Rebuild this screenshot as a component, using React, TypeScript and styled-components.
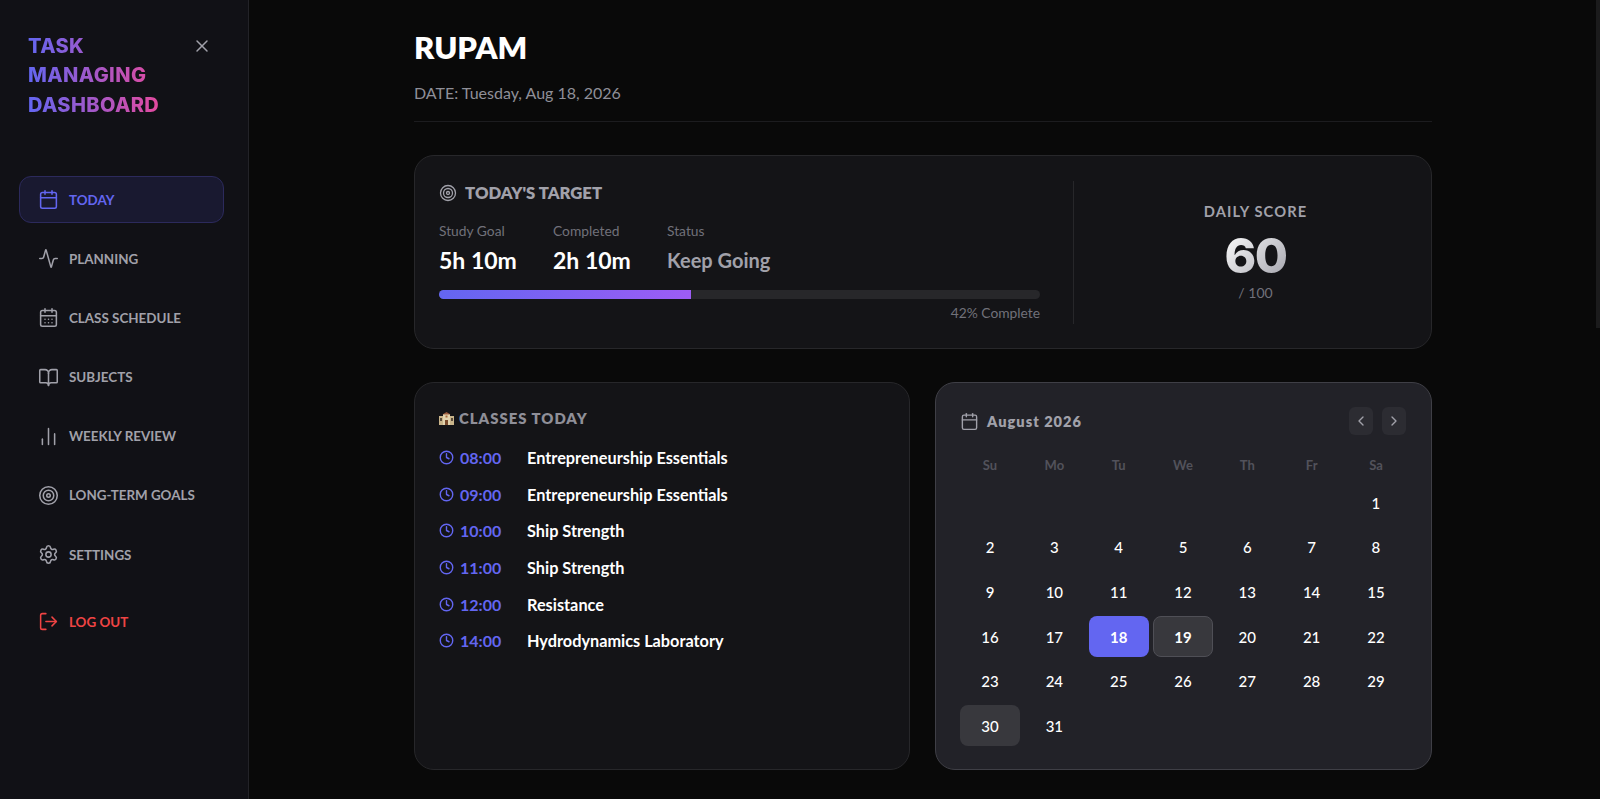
import { Activity, BookOpen, Calendar, CalendarDays, ChartNoAxesColumn, ChevronLeft, ChevronRight, Clock, LogOut, Settings, Target, X } from 'lucide-react';
import styled, { createGlobalStyle } from 'styled-components';

const GlobalStyle = createGlobalStyle`
  * {
    box-sizing: border-box;
  }

  html, body {
    margin: 0;
    height: 100%;
    overflow: hidden;
    background: #090909;
    font-family: 'Lato', 'Noto Sans', sans-serif;
  }
`;

const navItems = [
  { label: 'TODAY', icon: Calendar, active: true },
  { label: 'PLANNING', icon: Activity },
  { label: 'CLASS SCHEDULE', icon: CalendarDays },
  { label: 'SUBJECTS', icon: BookOpen },
  { label: 'WEEKLY REVIEW', icon: ChartNoAxesColumn },
  { label: 'LONG-TERM GOALS', icon: Target },
  { label: 'SETTINGS', icon: Settings },
];

const classes = [
  { time: '08:00', name: 'Entrepreneurship Essentials' },
  { time: '09:00', name: 'Entrepreneurship Essentials' },
  { time: '10:00', name: 'Ship Strength' },
  { time: '11:00', name: 'Ship Strength' },
  { time: '12:00', name: 'Resistance' },
  { time: '14:00', name: 'Hydrodynamics Laboratory' },
];

const stats = [
  { label: 'Study Goal', value: '5h 10m' },
  { label: 'Completed', value: '2h 10m' },
  { label: 'Status', value: 'Keep Going', muted: true },
];

const weekDays = ['Su', 'Mo', 'Tu', 'We', 'Th', 'Fr', 'Sa'];
const blanks = [0, 1, 2, 3, 4, 5];
const days = Array.from({ length: 31 }, (_, i) => i + 1);

function SchoolIcon() {
  return (
    <svg width="15" height="13" viewBox="0 0 15 13">
      <rect x="0" y="4" width="15" height="9" fill="#c9b48a" />
      <rect x="4" y="2" width="7" height="11" fill="#e2d3ae" />
      <path d="M3.5 2.5 7.5 0 11.5 2.5Z" fill="#9a5a3c" />
      <rect x="6" y="8" width="3" height="5" fill="#7a4a2c" />
      <rect x="1" y="6" width="2" height="3" fill="#5a4a3a" />
      <rect x="12" y="6" width="2" height="3" fill="#5a4a3a" />
      <rect x="6.5" y="3.5" width="2" height="2" fill="#a86a3c" />
    </svg>
  );
}

export default function App() {
  return (
    <Layout>
      <GlobalStyle />
      <Sidebar>
        <Brand>
          <BrandTitle>TASK MANAGING DASHBOARD</BrandTitle>
          <CloseButton type="button"><X size={20} strokeWidth={1.75} /></CloseButton>
        </Brand>
        <Nav>
          {navItems.map(({ label, icon: Icon, active }) => (
            <NavItem key={label} $active={active}>
              <Icon size={21} strokeWidth={1.75} />
              {label}
            </NavItem>
          ))}
          <Logout>
            <LogOut size={21} strokeWidth={1.75} />
            LOG OUT
          </Logout>
        </Nav>
      </Sidebar>
      <Main>
        <Content>
          <Header>
            <Name>RUPAM</Name>
            <DateLine>DATE: Tuesday, Aug 18, 2026</DateLine>
          </Header>
          <TargetCard>
            <TargetLeft>
              <TargetTitle><Target size={18} strokeWidth={1.75} />TODAY'S TARGET</TargetTitle>
              <Stats>
                {stats.map((stat) => (
                  <Stat key={stat.label}>
                    <StatLabel>{stat.label}</StatLabel>
                    <StatValue $muted={stat.muted}>{stat.value}</StatValue>
                  </Stat>
                ))}
              </Stats>
              <Track><Fill style={{ width: '42%' }} /></Track>
              <Percent>42% Complete</Percent>
            </TargetLeft>
            <Score>
              <ScoreLabel>DAILY SCORE</ScoreLabel>
              <ScoreValue>60</ScoreValue>
              <ScoreMax>/ 100</ScoreMax>
            </Score>
          </TargetCard>
          <Columns>
            <ClassesCard>
              <ClassesTitle><SchoolIcon />CLASSES TODAY</ClassesTitle>
              <ClassList>
                {classes.map((item, idx) => (
                  <ClassRow key={idx}>
                    <Time><Clock size={15} strokeWidth={2.25} />{item.time}</Time>
                    <ClassName>{item.name}</ClassName>
                  </ClassRow>
                ))}
              </ClassList>
            </ClassesCard>
            <CalendarCard>
              <CalendarHead>
                <Month><Calendar size={19} strokeWidth={1.75} />August 2026</Month>
                <Arrows>
                  <Arrow type="button"><ChevronLeft size={16} strokeWidth={2} /></Arrow>
                  <Arrow type="button"><ChevronRight size={16} strokeWidth={2} /></Arrow>
                </Arrows>
              </CalendarHead>
              <WeekRow>
                {weekDays.map((day) => <WeekDay key={day}>{day}</WeekDay>)}
              </WeekRow>
              <DayGrid>
                {blanks.map((n) => <Day key={n} as="span" />)}
                {days.map((day) => (
                  <Day key={day} $today={day === 18} $marked={day === 19} $soft={day === 30}>{day}</Day>
                ))}
              </DayGrid>
            </CalendarCard>
          </Columns>
        </Content>
        <ScrollThumb />
      </Main>
    </Layout>
  );
}

const Layout = styled.div`
  display: flex;
  height: 100vh;
  background: #090909;
`;

const Sidebar = styled.aside`
  flex-shrink: 0;
  width: 249px;
  height: 100%;
  padding: 32px 24px 0 19px;
  background: #111116;
  border-right: 1px solid #232328;
`;

const Brand = styled.div`
  display: flex;
  justify-content: space-between;
  align-items: flex-start;
  height: 144px;
  padding: 0 12px 0 9px;
`;

const BrandTitle = styled.h1`
  width: 140px;
  margin: 0;
  font-family: 'Inter', sans-serif;
  font-size: 20px;
  font-weight: 800;
  letter-spacing: 0.4px;
  line-height: 29.3px;
  background: linear-gradient(90deg, #6366f1, #ec4899);
  -webkit-background-clip: text;
  background-clip: text;
  color: transparent;
`;

const CloseButton = styled.button`
  display: flex;
  margin: 4px 0 0;
  padding: 0;
  border: none;
  background: none;
  color: #a1a1aa;
`;

const Nav = styled.nav`
  display: flex;
  flex-direction: column;
  gap: 12.2px;
`;

const NavItem = styled.a<{ $active?: boolean }>`
  display: flex;
  align-items: center;
  gap: 10px;
  height: 47px;
  padding: 0 18px;
  border-radius: 12px;
  border: 1px solid ${(props) => (props.$active ? '#2c2a5c' : 'transparent')};
  background: ${(props) => (props.$active ? '#191930' : 'transparent')};
  color: ${(props) => (props.$active ? '#6366f1' : '#a1a1aa')};
  font-size: 13.4px;
  font-weight: 700;
`;

const Logout = styled(NavItem)`
  margin-top: 8px;
  color: #ef4444;
`;

const Main = styled.main`
  position: relative;
  flex: 1;
  display: flex;
  justify-content: center;
  padding: 28px 3px 0 0;
`;

const ScrollThumb = styled.div`
  position: absolute;
  top: 0;
  right: 0;
  width: 4px;
  height: 328px;
  background: #1b1b1c;
`;

const Content = styled.div`
  width: 1018px;
`;

const Header = styled.header`
  height: 94px;
  border-bottom: 1px solid #1c1c1f;
`;

const Name = styled.h2`
  margin: 0 0 15px;
  color: #fff;
  font-size: 31px;
  font-weight: 800;
  line-height: 38px;
`;

const DateLine = styled.p`
  margin: 0;
  color: #8f8f98;
  font-size: 16px;
  line-height: 24px;
`;

const Card = styled.section`
  background: #141417;
  border: 1px solid #27272a;
  border-radius: 20px;
`;

const TargetCard = styled(Card)`
  display: grid;
  grid-template-columns: 635px 1fr;
  height: 194px;
  margin-top: 33px;
  padding: 25px 0 24px 24px;
`;

const TargetLeft = styled.div`
  display: flex;
  flex-direction: column;
  padding-right: 33px;
  border-right: 1px solid #27272a;
`;

const TargetTitle = styled.h3`
  display: flex;
  align-items: center;
  gap: 8px;
  margin: 0 0 17px;
  color: #a1a1aa;
  font-size: 16.7px;
  font-weight: 800;
  line-height: 24px;
`;

const Stats = styled.div`
  display: flex;
  margin-bottom: 14px;
`;

const Stat = styled.div`
  width: 114px;
`;

const StatLabel = styled.div`
  margin-bottom: 4px;
  color: #71717a;
  font-size: 13.8px;
  line-height: 18px;
`;

const StatValue = styled.div<{ $muted?: boolean }>`
  color: ${(props) => (props.$muted ? '#a1a1aa' : '#fff')};
  font-size: ${(props) => (props.$muted ? '20px' : '23px')};
  font-weight: 700;
  line-height: 32px;
  white-space: nowrap;
`;

const Track = styled.div`
  height: 9px;
  border-radius: 5px;
  background: #27272a;
  overflow: hidden;
`;

const Fill = styled.div`
  height: 100%;
  background: linear-gradient(90deg, #6366f1, #9d5cf5);
`;

const Percent = styled.div`
  margin-top: 5px;
  color: #71717a;
  font-size: 13.8px;
  line-height: 18px;
  text-align: right;
`;

const Score = styled.div`
  display: flex;
  flex-direction: column;
  align-items: center;
  padding: 20px 0 0 6px;
`;

const ScoreLabel = styled.div`
  color: #a1a1aa;
  font-size: 14.7px;
  font-weight: 700;
  letter-spacing: 1.1px;
  line-height: 20px;
`;

const ScoreValue = styled.div`
  margin-top: 9px;
  font-family: 'Inter', sans-serif;
  font-size: 48px;
  font-weight: 800;
  letter-spacing: -1.5px;
  line-height: 52px;
  background: linear-gradient(135deg, #fff, #a1a1aa);
  -webkit-background-clip: text;
  background-clip: text;
  color: transparent;
`;

const ScoreMax = styled.div`
  margin-top: 1px;
  color: #71717a;
  font-size: 14px;
  line-height: 20px;
`;

const Columns = styled.div`
  display: grid;
  grid-template-columns: 496px 1fr;
  gap: 25px;
  margin-top: 33px;
`;

const ClassesCard = styled(Card)`
  height: 388px;
  padding: 24px 24px;
`;

const ClassesTitle = styled.h3`
  display: flex;
  align-items: center;
  gap: 5px;
  margin: 0 0 10px;
  color: #8f8f98;
  font-size: 14.9px;
  font-weight: 800;
  letter-spacing: 1px;
  line-height: 22px;
`;

const ClassList = styled.ul`
  display: flex;
  flex-direction: column;
  margin: 0;
  padding: 0;
  list-style: none;
`;

const ClassRow = styled.li`
  display: flex;
  align-items: center;
  height: 36.7px;
`;

const Time = styled.span`
  display: flex;
  align-items: center;
  gap: 6px;
  width: 88px;
  color: #6366f1;
  font-size: 16px;
  font-weight: 700;
`;

const ClassName = styled.span`
  color: #fff;
  font-size: 16.3px;
  font-weight: 700;
`;

const CalendarCard = styled(Card)`
  height: 388px;
  padding: 24px 25px 24px 24px;
  background: #222228;
  border-color: #3f3f46;
`;

const CalendarHead = styled.div`
  display: flex;
  justify-content: space-between;
  align-items: center;
  height: 28px;
  margin-bottom: 21px;
`;

const Month = styled.div`
  display: flex;
  align-items: center;
  gap: 8px;
  color: #a1a1aa;
  font-size: 14.6px;
  font-weight: 800;
  letter-spacing: 1px;
`;

const Arrows = styled.div`
  display: flex;
  gap: 9px;
`;

const Arrow = styled.button`
  display: flex;
  align-items: center;
  justify-content: center;
  width: 24px;
  height: 28px;
  padding: 0;
  border: none;
  border-radius: 6px;
  background: #2c2c32;
  color: #a1a1aa;
`;

const WeekRow = styled.div`
  display: grid;
  grid-template-columns: repeat(7, 1fr);
  gap: 4.3px;
  margin-bottom: 8px;
`;

const WeekDay = styled.div`
  color: #52525b;
  font-size: 13px;
  font-weight: 700;
  line-height: 18px;
  text-align: center;
`;

const DayGrid = styled.div`
  display: grid;
  grid-template-columns: repeat(7, 1fr);
  grid-auto-rows: 41px;
  gap: 3.7px 4.2px;
`;

const Day = styled.button<{ $today?: boolean; $marked?: boolean; $soft?: boolean }>`
  display: flex;
  align-items: center;
  justify-content: center;
  padding: 0;
  border: 1px solid ${(props) => (props.$marked ? '#4f4f56' : 'transparent')};
  border-radius: 8px;
  background: ${(props) => {
    if (props.$today) return '#6366f1';
    if (props.$marked || props.$soft) return '#38383d';
    return 'transparent';
  }};
  color: #fff;
  font-family: inherit;
  font-size: 15px;
  font-weight: ${(props) => (props.$today || props.$marked ? 700 : 500)};
`;
